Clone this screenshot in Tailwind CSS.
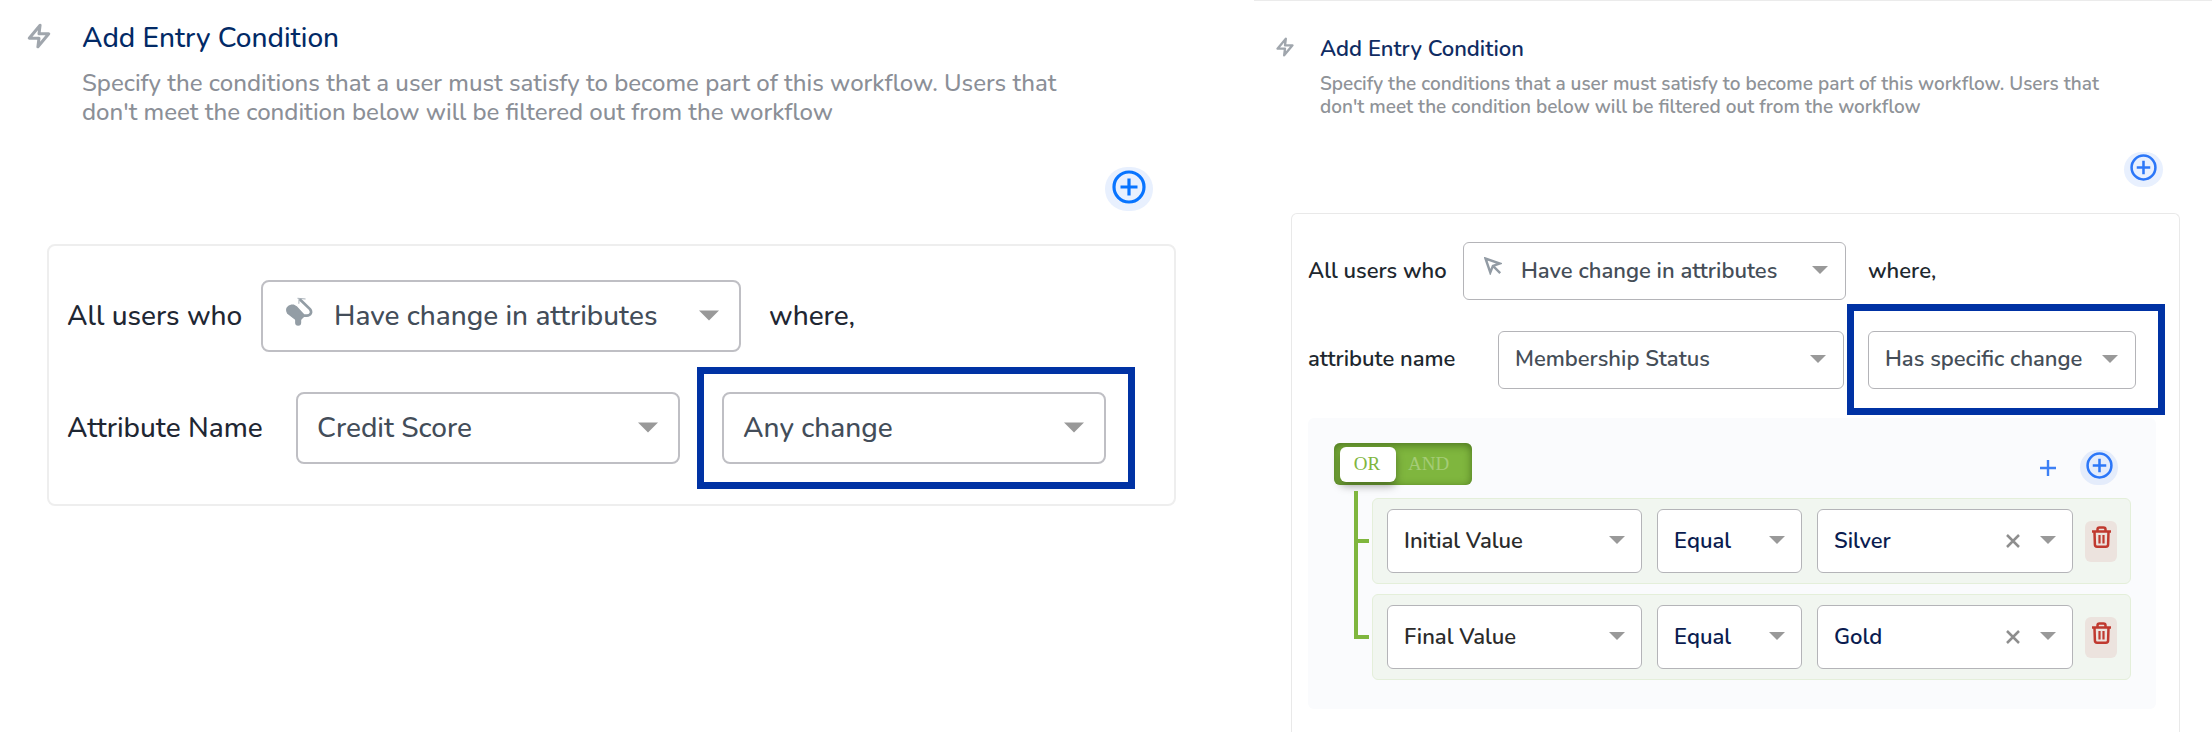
<!DOCTYPE html>
<html lang="en">
<head>
<meta charset="utf-8">
<meta name="viewport" content="width=device-width, initial-scale=1">
<title>Add Entry Condition</title>
<script src="https://cdn.jsdelivr.net/npm/@tailwindcss/browser@4"></script>
</head>
<body class="bg-white font-[Nunito,'Open_Sans',sans-serif] font-medium">
<svg class="hidden" aria-hidden="true">
  <symbol id="bolt" viewBox="0 0 24 24"><path d="M13 2 3 14h9l-1 8 10-12h-9l1-8z" fill="none" stroke="currentColor" stroke-width="2.800" stroke-linecap="round" stroke-linejoin="round"/></symbol>
  <symbol id="caret" viewBox="0 0 20 10"><path d="M0 0h20L10 10z" fill="currentColor"/></symbol>
  <symbol id="circle-plus" viewBox="0 0 34 34"><g fill="none" stroke="currentColor" stroke-width="3.200"><circle cx="17" cy="17" r="15"/><path d="M17 8.500v17M8.500 17h17"/></g></symbol>
  <symbol id="close" viewBox="0 0 14 14"><path d="M1 1l12 12M13 1 1 13" fill="none" stroke="currentColor" stroke-width="2.500"/></symbol>
  <symbol id="trash" viewBox="0 0 19 22"><g fill="none" stroke="currentColor" stroke-width="2.500"><path d="M0 5.500h19M5.500 5V3.500a2 2 0 0 1 2-2h4a2 2 0 0 1 2 2V5M2.500 6l.4 12.500a2.200 2.200 0 0 0 2.200 2.200h8.800a2.200 2.200 0 0 0 2.200-2.200L16.500 6"/><path d="M7.500 9v8.500M11.500 9v8.500" stroke-width="2.200"/></g></symbol>
</svg>

<main class="flex items-start">
  <!-- Any change -->
  <section class="flex min-w-0 flex-[1254] flex-col pt-[18px]" aria-labelledby="title-any">
    <header class="flex gap-[30px] pl-[26px]">
      <svg class="mt-[5px] h-[26px] w-[26px] shrink-0 text-[#a0a6ad]" aria-hidden="true"><use href="#bolt"/></svg>
      <div>
        <h2 id="title-any" class="text-[28px] leading-10 text-[#022a66]">Add Entry Condition</h2>
        <p class="mt-[11px] max-w-[1000px] text-2xl leading-[29px] text-[#8b8f97]">Specify the conditions that a user must satisfy to become part of this workflow. Users that don't meet the condition below will be filtered out from the workflow</p>
      </div>
    </header>
    <button type="button" aria-label="Add condition" class="mt-10 mr-[101px] flex h-11 w-12 items-center justify-center self-end rounded-full bg-[#e8f0fe] pb-1 text-[#0874ff]">
      <svg class="h-[34px] w-[34px]" aria-hidden="true"><use href="#circle-plus"/></svg>
    </button>
    <div class="mt-[33px] mr-[78px] ml-[47px] flex flex-col gap-[15px] rounded-lg border-2 border-[#eee] pt-[34px] pr-[39px] pb-[15px] pl-[18px] text-[28px] text-[#1f2733]">
      <div class="flex items-center">
        <label for="any-event" class="w-[194px] shrink-0">All users who</label>
        <div class="relative w-[480px] min-w-0">
          <select id="any-event" class="h-[72px] w-full appearance-none rounded-lg border-2 border-[#bfbfc4] bg-white pr-12 pl-[71px] text-[#434d59]"><option>Have change in attributes</option></select>
          <svg class="pointer-events-none absolute top-[30px] right-[22px] h-[11px] w-5 text-[#999]" aria-hidden="true"><use href="#caret"/></svg>
          <svg class="pointer-events-none absolute top-[17px] left-[25px] h-[29px] w-[27px]" viewBox="78 50 80 86" aria-hidden="true">
            <path d="M94 74h6l10 6 20 22v6l-9 9h-14L83 98c-6-10-2-22 11-24z" fill="#939da5" stroke="#939da5" stroke-width="4" stroke-linejoin="round"/>
            <path d="M114 112v14" stroke="#939da5" stroke-width="18" stroke-linecap="round"/>
            <path d="M118 56l31 30c7 9 2 19-9 19h-14" fill="none" stroke="#939da5" stroke-width="8"/>
            <path d="M112 54l24 2M117 54l-1 16" fill="none" stroke="#a9b1b8" stroke-width="3"/>
          </svg>
        </div>
        <span class="ml-7">where,</span>
      </div>
      <div class="flex items-center">
        <label for="any-attribute" class="w-[229px] shrink-0">Attribute Name</label>
        <div class="relative w-[384px] min-w-0">
          <select id="any-attribute" class="h-[72px] w-full appearance-none rounded-lg border-2 border-[#bfbfc4] bg-white pr-12 pl-[19px] text-[#434d59]"><option>Credit Score</option></select>
          <svg class="pointer-events-none absolute top-[30px] right-[22px] h-[11px] w-5 text-[#999]" aria-hidden="true"><use href="#caret"/></svg>
        </div>
        <div class="ml-[17px] flex h-[122px] min-w-0 flex-1 items-center border-[7px] border-[#0032a4] pr-[22px] pl-[18px]">
          <div class="relative w-full">
            <select aria-label="Change type" class="h-[72px] w-full appearance-none rounded-lg border-2 border-[#bfbfc4] bg-white pr-12 pl-[19px] text-[#434d59]"><option>Any change</option></select>
            <svg class="pointer-events-none absolute top-[30px] right-[22px] h-[11px] w-5 text-[#999]" aria-hidden="true"><use href="#caret"/></svg>
          </div>
        </div>
      </div>
    </div>
  </section>

  <!-- Specific change -->
  <section class="flex min-w-0 flex-[958] flex-col border-t border-[#ebebeb] pt-8 font-semibold" aria-labelledby="title-specific">
    <header class="flex gap-[25px] pl-[21px]">
      <svg class="mt-1 h-5 w-5 shrink-0 text-[#a0a6ad]" aria-hidden="true"><use href="#bolt"/></svg>
      <div>
        <h2 id="title-specific" class="text-[22px] leading-8 text-[#0f2c63]">Add Entry Condition</h2>
        <p class="mt-2 max-w-[800px] text-[19px] leading-[23px] text-[#8f9398]">Specify the conditions that a user must satisfy to become part of this workflow. Users that don't meet the condition below will be filtered out from the workflow</p>
      </div>
    </header>
    <button type="button" aria-label="Add condition" class="mt-[33px] mr-[49px] flex h-[35px] w-[39px] items-center justify-center self-end rounded-full bg-[#e8f0fe] pb-1 text-[#2c77f8]">
      <svg class="h-[27px] w-[27px]" aria-hidden="true"><use href="#circle-plus"/></svg>
    </button>
    <div class="mt-[26px] mr-8 mb-3 ml-[37px] flex flex-col rounded-t-md border border-b-0 border-[#e9e9e9] pt-7 pr-[14px] pb-[23px] pl-4 text-[22px] text-[#20272e]">
      <div class="flex items-center">
        <label for="specific-event" class="w-[155px] shrink-0">All users who</label>
        <div class="relative w-[383px] min-w-0">
          <select id="specific-event" class="h-[58px] w-full appearance-none rounded-md border border-[#b4b4b8] bg-white pr-10 pl-[57px] text-[#454e58]"><option>Have change in attributes</option></select>
          <svg class="pointer-events-none absolute top-[15px] left-[21px] h-[18px] w-[18px] text-[#929ba4]" viewBox="0 0 18 18" aria-hidden="true"><path d="M1.500 1.500l4.800 14 2.600-6.600 7-2.400zM9.200 9.200l7 7" fill="none" stroke="currentColor" stroke-width="2.400"/></svg>
          <svg class="pointer-events-none absolute top-6 right-[18px] h-2 w-4 text-[#999]" aria-hidden="true"><use href="#caret"/></svg>
        </div>
        <span class="ml-[22px]">where,</span>
      </div>
      <div class="mt-1 flex items-center">
        <label for="specific-attribute" class="w-[190px] shrink-0">attribute name</label>
        <div class="relative w-[346px] min-w-0">
          <select id="specific-attribute" class="h-[58px] w-full appearance-none rounded-md border border-[#b4b4b8] bg-white pr-10 pl-4 text-[#454e58]"><option>Membership Status</option></select>
          <svg class="pointer-events-none absolute top-6 right-[18px] h-2 w-4 text-[#999]" aria-hidden="true"><use href="#caret"/></svg>
        </div>
        <div class="ml-[3px] flex h-[111px] min-w-0 flex-1 items-center border-[7px] border-[#0032a4] pr-[22px] pl-[14px]">
          <div class="relative w-full">
            <select aria-label="Change type" class="h-[58px] w-full appearance-none rounded-md border border-[#b4b4b8] bg-white pr-10 pl-4 text-[#454e58]"><option>Has specific change</option></select>
            <svg class="pointer-events-none absolute top-6 right-[18px] h-2 w-4 text-[#999]" aria-hidden="true"><use href="#caret"/></svg>
          </div>
        </div>
      </div>

      <div class="mt-[3px] mr-[9px] rounded-md bg-[#fafbfd] pt-[25px] pr-[25px] pb-[29px] pl-[26px]">
        <div class="flex items-end justify-between pr-[13px]">
          <div role="group" aria-label="Match" class="flex h-[42px] w-[138px] rounded-md bg-[#7fb63e] pt-1 pb-[3px] pl-1.5 font-['Liberation_Serif',serif] text-[19px] font-normal shadow-[inset_0_2px_8px_rgba(40,70,10,0.600)]">
            <button type="button" aria-pressed="true" class="h-[35px] w-14 rounded-md bg-white pr-0.5 text-[#7fb63e] shadow-[0_4px_8px_rgba(0,0,0,0.350)]">OR</button>
            <button type="button" aria-pressed="false" class="px-3 text-[#a5cc77]">AND</button>
          </div>
          <div class="flex gap-6">
            <button type="button" aria-label="Add rule" class="flex h-[35px] w-4 items-center text-[#3d80f5]">
              <svg class="h-4 w-4" viewBox="0 0 16 16" aria-hidden="true"><path d="M8 0v16M0 8h16" fill="none" stroke="currentColor" stroke-width="2.400"/></svg>
            </button>
            <button type="button" aria-label="Add group" class="flex h-[35px] w-[38px] items-center justify-center rounded-full bg-[#e4ecfb] pb-1 text-[#2c77f8]">
              <svg class="h-[27px] w-[27px]" aria-hidden="true"><use href="#circle-plus"/></svg>
            </button>
          </div>
        </div>

        <ul class="mt-1.5 pl-5">
          <li class="flex gap-[3px]">
            <div class="flex w-[15px] shrink-0 flex-col">
              <div class="h-[52px] border-b-4 border-l-4 border-[#7fb63e]"></div>
              <div class="flex-1 border-l-4 border-[#7fb63e]"></div>
            </div>
            <div class="mt-[7px] mb-[10px] flex h-[86px] min-w-0 flex-1 items-center gap-[15px] rounded-md border border-[#e4efda] bg-[#f1f6f0] pr-[13px] pl-[14px]">
              <div class="relative min-w-0 flex-[255]">
                <select aria-label="Value type" class="h-16 w-full appearance-none rounded-md border border-[#b4b4b8] bg-white pr-10 pl-4 text-[#2b2b2b]"><option>Initial Value</option></select>
                <svg class="pointer-events-none absolute top-[27px] right-[17px] h-2 w-4 text-[#999]" aria-hidden="true"><use href="#caret"/></svg>
              </div>
              <div class="relative min-w-0 flex-[145]">
                <select aria-label="Operator" class="h-16 w-full appearance-none rounded-md border border-[#b4b4b8] bg-white pr-10 pl-4 text-[#0a1c50]"><option>Equal</option></select>
                <svg class="pointer-events-none absolute top-[27px] right-[17px] h-2 w-4 text-[#999]" aria-hidden="true"><use href="#caret"/></svg>
              </div>
              <div class="relative min-w-0 flex-[256]">
                <select aria-label="Value" class="h-16 w-full appearance-none rounded-md border border-[#b4b4b8] bg-white pr-20 pl-4 text-[#0a1c50]"><option>Silver</option></select>
                <button type="button" aria-label="Clear value" class="absolute top-[25px] right-[53px] text-[#8e8e8e]"><svg class="h-[14px] w-[14px]" aria-hidden="true"><use href="#close"/></svg></button>
                <svg class="pointer-events-none absolute top-[27px] right-[17px] h-2 w-4 text-[#999]" aria-hidden="true"><use href="#caret"/></svg>
              </div>
              <button type="button" aria-label="Delete rule" class="-ml-[3px] flex h-[41px] w-8 shrink-0 items-center justify-center rounded-md bg-[#ece3de] pb-2 text-[#c0392f]"><svg class="h-[22px] w-[19px]" aria-hidden="true"><use href="#trash"/></svg></button>
            </div>
          </li>
          <li class="flex gap-[3px]">
            <div class="flex w-[15px] shrink-0 flex-col">
              <div class="h-[45px] border-b-4 border-l-4 border-[#7fb63e]"></div>
            </div>
            <div class="flex h-[86px] min-w-0 flex-1 items-center gap-[15px] rounded-md border border-[#e4efda] bg-[#f1f6f0] pr-[13px] pl-[14px]">
              <div class="relative min-w-0 flex-[255]">
                <select aria-label="Value type" class="h-16 w-full appearance-none rounded-md border border-[#b4b4b8] bg-white pr-10 pl-4 text-[#2b2b2b]"><option>Final Value</option></select>
                <svg class="pointer-events-none absolute top-[27px] right-[17px] h-2 w-4 text-[#999]" aria-hidden="true"><use href="#caret"/></svg>
              </div>
              <div class="relative min-w-0 flex-[145]">
                <select aria-label="Operator" class="h-16 w-full appearance-none rounded-md border border-[#b4b4b8] bg-white pr-10 pl-4 text-[#0a1c50]"><option>Equal</option></select>
                <svg class="pointer-events-none absolute top-[27px] right-[17px] h-2 w-4 text-[#999]" aria-hidden="true"><use href="#caret"/></svg>
              </div>
              <div class="relative min-w-0 flex-[256]">
                <select aria-label="Value" class="h-16 w-full appearance-none rounded-md border border-[#b4b4b8] bg-white pr-20 pl-4 text-[#0a1c50]"><option>Gold</option></select>
                <button type="button" aria-label="Clear value" class="absolute top-[25px] right-[53px] text-[#8e8e8e]"><svg class="h-[14px] w-[14px]" aria-hidden="true"><use href="#close"/></svg></button>
                <svg class="pointer-events-none absolute top-[27px] right-[17px] h-2 w-4 text-[#999]" aria-hidden="true"><use href="#caret"/></svg>
              </div>
              <button type="button" aria-label="Delete rule" class="-ml-[3px] flex h-[41px] w-8 shrink-0 items-center justify-center rounded-md bg-[#ece3de] pb-2 text-[#c0392f]"><svg class="h-[22px] w-[19px]" aria-hidden="true"><use href="#trash"/></svg></button>
            </div>
          </li>
        </ul>
      </div>
    </div>
  </section>
</main>
</body>
</html>
